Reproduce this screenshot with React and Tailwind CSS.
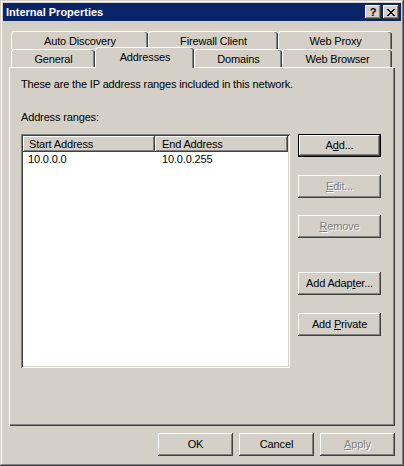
const RAISED = "shadow-[inset_-1px_-1px_#404040,inset_1px_1px_#ffffff,inset_-2px_-2px_#808080]";
const SUNKEN = "shadow-[inset_1px_1px_#808080,inset_-1px_-1px_#ffffff,inset_2px_2px_#404040,inset_-2px_-2px_#d4d0c8]";
const TAB = "border-l border-t border-white rounded-t-[3px] shadow-[inset_-1px_0_#404040,inset_-2px_0_#808080] text-center pt-[3px]";

function Btn({ children, disabled, isDefault, className = "" }) {
  return (
    <div className={`h-[23px] ${isDefault ? "border border-black" : ""} ${className}`}>
      <div className={`h-full flex items-center justify-center ${RAISED} ${disabled ? "text-[#808080] [text-shadow:1px_1px_0_#ffffff]" : "text-black"}`}>
        {children}
      </div>
    </div>
  );
}

function CloseGlyph() {
  const px = [
    [0, 0], [1, 0], [6, 0], [7, 0],
    [1, 1], [2, 1], [5, 1], [6, 1],
    [2, 2], [3, 2], [4, 2], [5, 2],
    [3, 3], [4, 3],
    [2, 4], [3, 4], [4, 4], [5, 4],
    [1, 5], [2, 5], [5, 5], [6, 5],
    [0, 6], [1, 6], [6, 6], [7, 6],
  ];
  return (
    <svg width="8" height="7" shapeRendering="crispEdges">
      {px.map(([x, y]) => <rect key={`${x}-${y}`} x={x} y={y} width="1" height="1" fill="#000" />)}
    </svg>
  );
}

export default function App() {
  return (
    <div className="w-[404px] h-[466px] bg-[#d4d0c8] p-[3px] flex flex-col font-['Liberation_Sans',Arial,sans-serif] text-[11px] leading-[13px] tracking-[-0.15px] text-black shadow-[inset_-1px_-1px_#404040,inset_1px_1px_#d4d0c8,inset_-2px_-2px_#808080,inset_2px_2px_#ffffff]">
      {/* title bar */}
      <div className="h-[18px] bg-[#0a246a] flex items-center justify-between pl-[3px] pr-[2px]">
        <span className="text-white font-bold text-[11px] tracking-normal">Internal Properties</span>
        <div className="flex gap-[2px]">
          <div className={`w-[16px] h-[14px] bg-[#d4d0c8] flex items-center justify-center font-bold text-[11px] leading-none ${RAISED}`}>?</div>
          <div className={`w-[16px] h-[14px] bg-[#d4d0c8] flex items-center justify-center ${RAISED}`}>
            <CloseGlyph />
          </div>
        </div>
      </div>

      <div className="px-[6px] pt-[10px] flex flex-col">
        {/* tabs */}
        <div className="flex ml-[2px] h-[18px]">
          <div className={`w-[137px] h-[18px] ${TAB}`}>Auto Discovery</div>
          <div className={`w-[130px] h-[18px] ${TAB}`}>Firewall Client</div>
          <div className={`w-[114px] h-[18px] ${TAB}`}>Web Proxy</div>
        </div>
        <div className="flex ml-[2px] h-[18px]">
          <div className={`w-[84px] h-[18px] ${TAB}`}>General</div>
          <div className={`relative z-10 w-[99px] h-[21px] -mt-[2px] bg-[#d4d0c8] ${TAB}`}>Addresses</div>
          <div className={`w-[88px] h-[18px] ${TAB}`}>Domains</div>
          <div className={`w-[110px] h-[18px] ${TAB}`}>Web Browser</div>
        </div>

        {/* panel */}
        <div className="h-[359px] border-l border-t border-white shadow-[inset_-1px_-1px_#404040,inset_-2px_-2px_#808080] pl-[11px] pt-[10px]">
          <p>These are the IP address ranges included in this network.</p>
          <p className="mt-[20px]">Address ranges:</p>
          <div className="mt-[10px] flex items-start">
            <div className={`w-[269px] h-[234px] bg-white p-[2px] ${SUNKEN}`}>
              <div className="flex h-[16px] bg-[#d4d0c8]">
                <div className={`w-[132px] h-full pl-[6px] flex items-center ${RAISED}`}>Start Address</div>
                <div className={`flex-1 h-full pl-[7px] flex items-center ${RAISED}`}>End Address</div>
              </div>
              <div className="flex h-[15px] items-center">
                <div className="w-[132px] pl-[5px]">10.0.0.0</div>
                <div className="pl-[7px]">10.0.0.255</div>
              </div>
            </div>
            <div className="ml-[8px] w-[83px] flex flex-col">
              <Btn isDefault><span>A<u>d</u>d...</span></Btn>
              <Btn disabled className="mt-[18px]"><span><u>E</u>dit...</span></Btn>
              <Btn disabled className="mt-[17px]"><span><u>R</u>emove</span></Btn>
              <Btn className="mt-[34px]"><span>Add Adap<u>t</u>er...</span></Btn>
              <Btn className="mt-[18px]"><span>Add <u>P</u>rivate</span></Btn>
            </div>
          </div>
        </div>

        {/* dialog buttons */}
        <div className="mt-[7px] flex justify-end gap-[6px]">
          <Btn className="w-[75px]">OK</Btn>
          <Btn className="w-[75px]">Cancel</Btn>
          <Btn disabled className="w-[75px]"><span><u>A</u>pply</span></Btn>
        </div>
      </div>
    </div>
  );
}
